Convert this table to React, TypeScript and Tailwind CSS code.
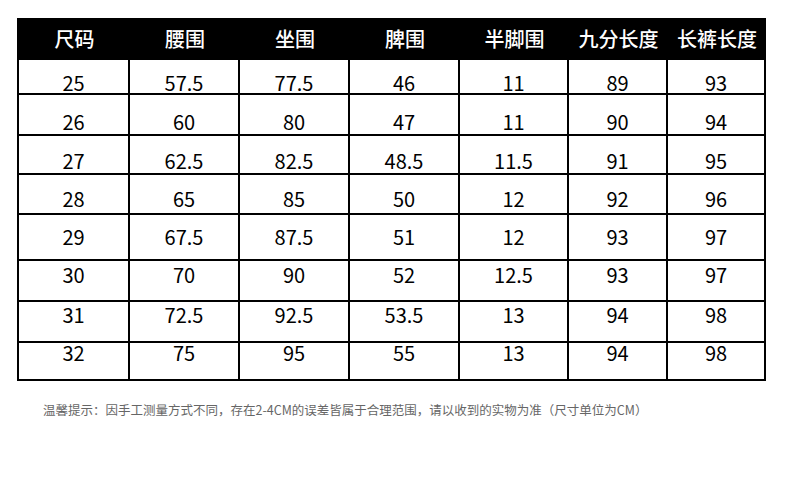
import React from "react";

const colClasses = [
  "w-[111px]",
  "w-[110px]",
  "w-[110px]",
  "w-[110px]",
  "w-[109px]",
  "w-[99px]",
  "w-[98px]",
];
const headers = ["尺码", "腰围", "坐围", "脾围", "半脚围", "九分长度", "长裤长度"];
const rows: { cls: string; pt: string; v: string[] }[] = [
  { cls: "h-[35px]", pt: "pt-[13px]", v: ["25", "57.5", "77.5", "46", "11", "89", "93"] },
  { cls: "h-[41px]", pt: "pt-[17px]", v: ["26", "60", "80", "47", "11", "90", "94"] },
  { cls: "h-[39px]", pt: "pt-[15px]", v: ["27", "62.5", "82.5", "48.5", "11.5", "91", "95"] },
  { cls: "h-[40px]", pt: "pt-[14px]", v: ["28", "65", "85", "50", "12", "92", "96"] },
  { cls: "h-[46px]", pt: "pt-[12px]", v: ["29", "67.5", "87.5", "51", "12", "93", "97"] },
  { cls: "h-[41px]", pt: "pt-[4px]", v: ["30", "70", "90", "52", "12.5", "93", "97"] },
  { cls: "h-[41px]", pt: "pt-[3px]", v: ["31", "72.5", "92.5", "53.5", "13", "94", "98"] },
  { cls: "h-[38px]", pt: "pt-0", v: ["32", "75", "95", "55", "13", "94", "98"] },
];

export default function App() {
  return (
    <div className="w-[790px] h-[484px] bg-white overflow-hidden pt-[18px] font-['Noto_Sans_CJK_SC','Noto_Sans',sans-serif]">
      <div className="ml-[17px] w-[749px] border-l-2 border-black">
        <div className="flex h-[42px] bg-black text-white">
          {headers.map((t, i) => (
            <div
              key={i}
              className={`${colClasses[i]} flex items-center justify-center text-[20px] font-medium leading-[20px]`}
            >
              {t}
            </div>
          ))}
        </div>
        {rows.map((r, ri) => (
          <div key={ri} className={`${r.cls} flex border-b-2 border-black box-border text-black`}>
            {r.v.map((t, i) => (
              <div
                key={i}
                className={`${colClasses[i]} ${r.pt} border-r-2 border-black flex justify-center text-[20px] leading-[20px]`}
              >
                {t}
              </div>
            ))}
          </div>
        ))}
      </div>
      <div className="ml-[43px] mt-[21px] text-[12.5px] leading-[16px] text-[#666666] whitespace-nowrap">
        温馨提示：因手工测量方式不同，存在2-4CM的误差皆属于合理范围，请以收到的实物为准（尺寸单位为CM）
      </div>
    </div>
  );
}
